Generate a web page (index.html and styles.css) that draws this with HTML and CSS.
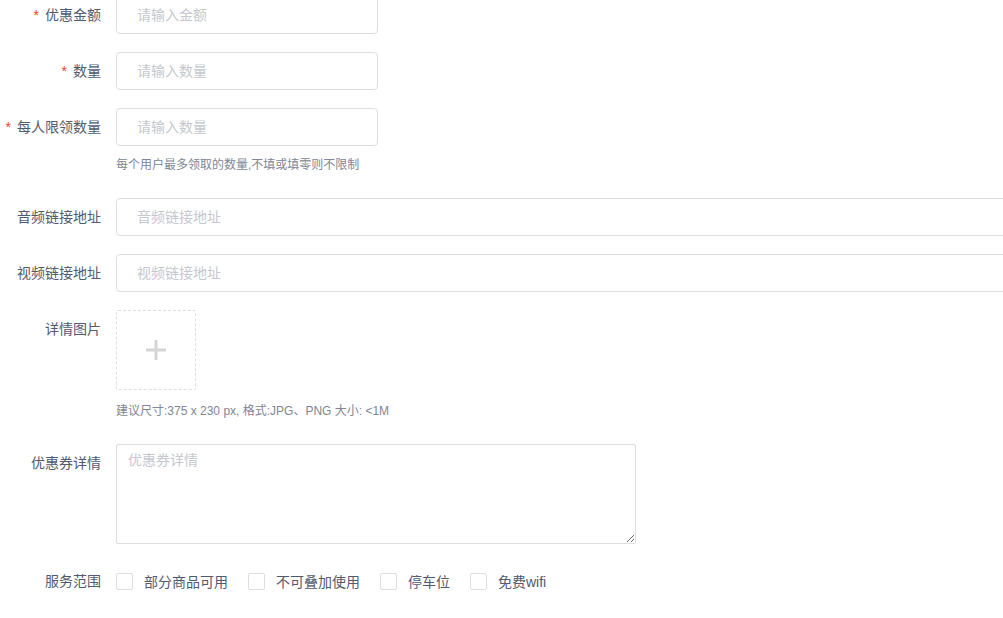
FILE: index.html
```html
<!DOCTYPE html>
<html lang="zh">
<head>
    <meta charset="UTF-8">
    <title>优惠券</title>
    <link rel="stylesheet" href="styles.css">
</head>
<body>
    <form class="form">
        <div class="form-item">
            <label class="form-label"><span class="req">*</span>优惠金额</label>
            <div class="form-content">
                <input class="input input-short" placeholder="请输入金额">
            </div>
        </div>
        <div class="form-item">
            <label class="form-label"><span class="req">*</span>数量</label>
            <div class="form-content">
                <input class="input input-short" placeholder="请输入数量">
            </div>
        </div>
        <div class="form-item">
            <label class="form-label"><span class="req">*</span>每人限领数量</label>
            <div class="form-content">
                <input class="input input-short" placeholder="请输入数量">
                <div class="help">每个用户最多领取的数量,不填或填零则不限制</div>
            </div>
        </div>
        <div class="form-item">
            <label class="form-label">音频链接地址</label>
            <div class="form-content">
                <input class="input input-wide" placeholder="音频链接地址">
            </div>
        </div>
        <div class="form-item">
            <label class="form-label">视频链接地址</label>
            <div class="form-content">
                <input class="input input-wide" placeholder="视频链接地址">
            </div>
        </div>
        <div class="form-item">
            <label class="form-label">详情图片</label>
            <div class="form-content">
                <div class="upload">
                    <svg width="22" height="22" viewBox="0 0 22 22">
                        <path d="M11 1v20M1 11h20" stroke="#d5d5d5" stroke-width="3" fill="none"/>
                    </svg>
                </div>
                <div class="help help-upload">建议尺寸:375 x 230 px, 格式:JPG、PNG 大小: &lt;1M</div>
            </div>
        </div>
        <div class="form-item">
            <label class="form-label">优惠券详情</label>
            <div class="form-content">
                <textarea class="textarea" placeholder="优惠券详情"></textarea>
            </div>
        </div>
        <div class="form-item">
            <label class="form-label">服务范围</label>
            <div class="form-content checks">
                <label class="check"><span class="check-box"></span>部分商品可用</label>
                <label class="check"><span class="check-box"></span>不可叠加使用</label>
                <label class="check"><span class="check-box"></span>停车位</label>
                <label class="check"><span class="check-box"></span>免费wifi</label>
            </div>
        </div>
    </form>
</body>
</html>
```

FILE: styles.css
```css
html, body {
    overflow: hidden;
}
body {
    margin: 0;
    background: #fff;
    font-family: "Liberation Sans", "Noto Sans CJK SC", sans-serif;
    font-size: 14px;
    color: #515a6e;
}
.form {
    margin-top: -4px;
    width: 1200px;
}
.form-item {
    display: flex;
    margin-bottom: 18px;
}
.form-label {
    width: 101px;
    height: 38px;
    margin-right: 15px;
    text-align: right;
    line-height: 38px;
    flex-shrink: 0;
}
.req {
    color: #ed4014;
    margin-right: 6px;
}
.form-content {
    flex: 1;
}
.input {
    box-sizing: border-box;
    height: 38px;
    border: 1px solid #dcdee2;
    border-radius: 4px;
    padding: 0 20px;
    font-family: inherit;
    font-size: 14px;
    color: #515a6e;
    outline: none;
    display: block;
}
.input::placeholder,
.textarea::placeholder {
    color: #c5c8ce;
}
.input-short {
    width: 262px;
}
.input-wide {
    width: 1000px;
}
.help {
    font-size: 12px;
    color: #808695;
    line-height: 18px;
    padding: 10px 0 6px 0;
}
.help-upload {
    padding: 12px 0 6px 0;
}
.upload {
    box-sizing: border-box;
    width: 80px;
    height: 80px;
    border: 1px dashed #dcdee2;
    border-radius: 2px;
    display: flex;
    align-items: center;
    justify-content: center;
}
.textarea {
    box-sizing: border-box;
    display: block;
    width: 520px;
    height: 100px;
    border: 1px solid #dcdee2;
    border-radius: 2px;
    padding: 7px 11px;
    font-family: inherit;
    font-size: 14px;
    line-height: 17px;
    outline: none;
    margin: 0;
}
.checks {
    display: flex;
    align-items: center;
    height: 38px;
}
.check {
    display: flex;
    align-items: center;
    margin-right: 20px;
}
.check-box {
    box-sizing: border-box;
    width: 17px;
    height: 17px;
    border: 1px solid #dcdee2;
    border-radius: 2px;
    margin-right: 11px;
    background: #fff;
}
```
